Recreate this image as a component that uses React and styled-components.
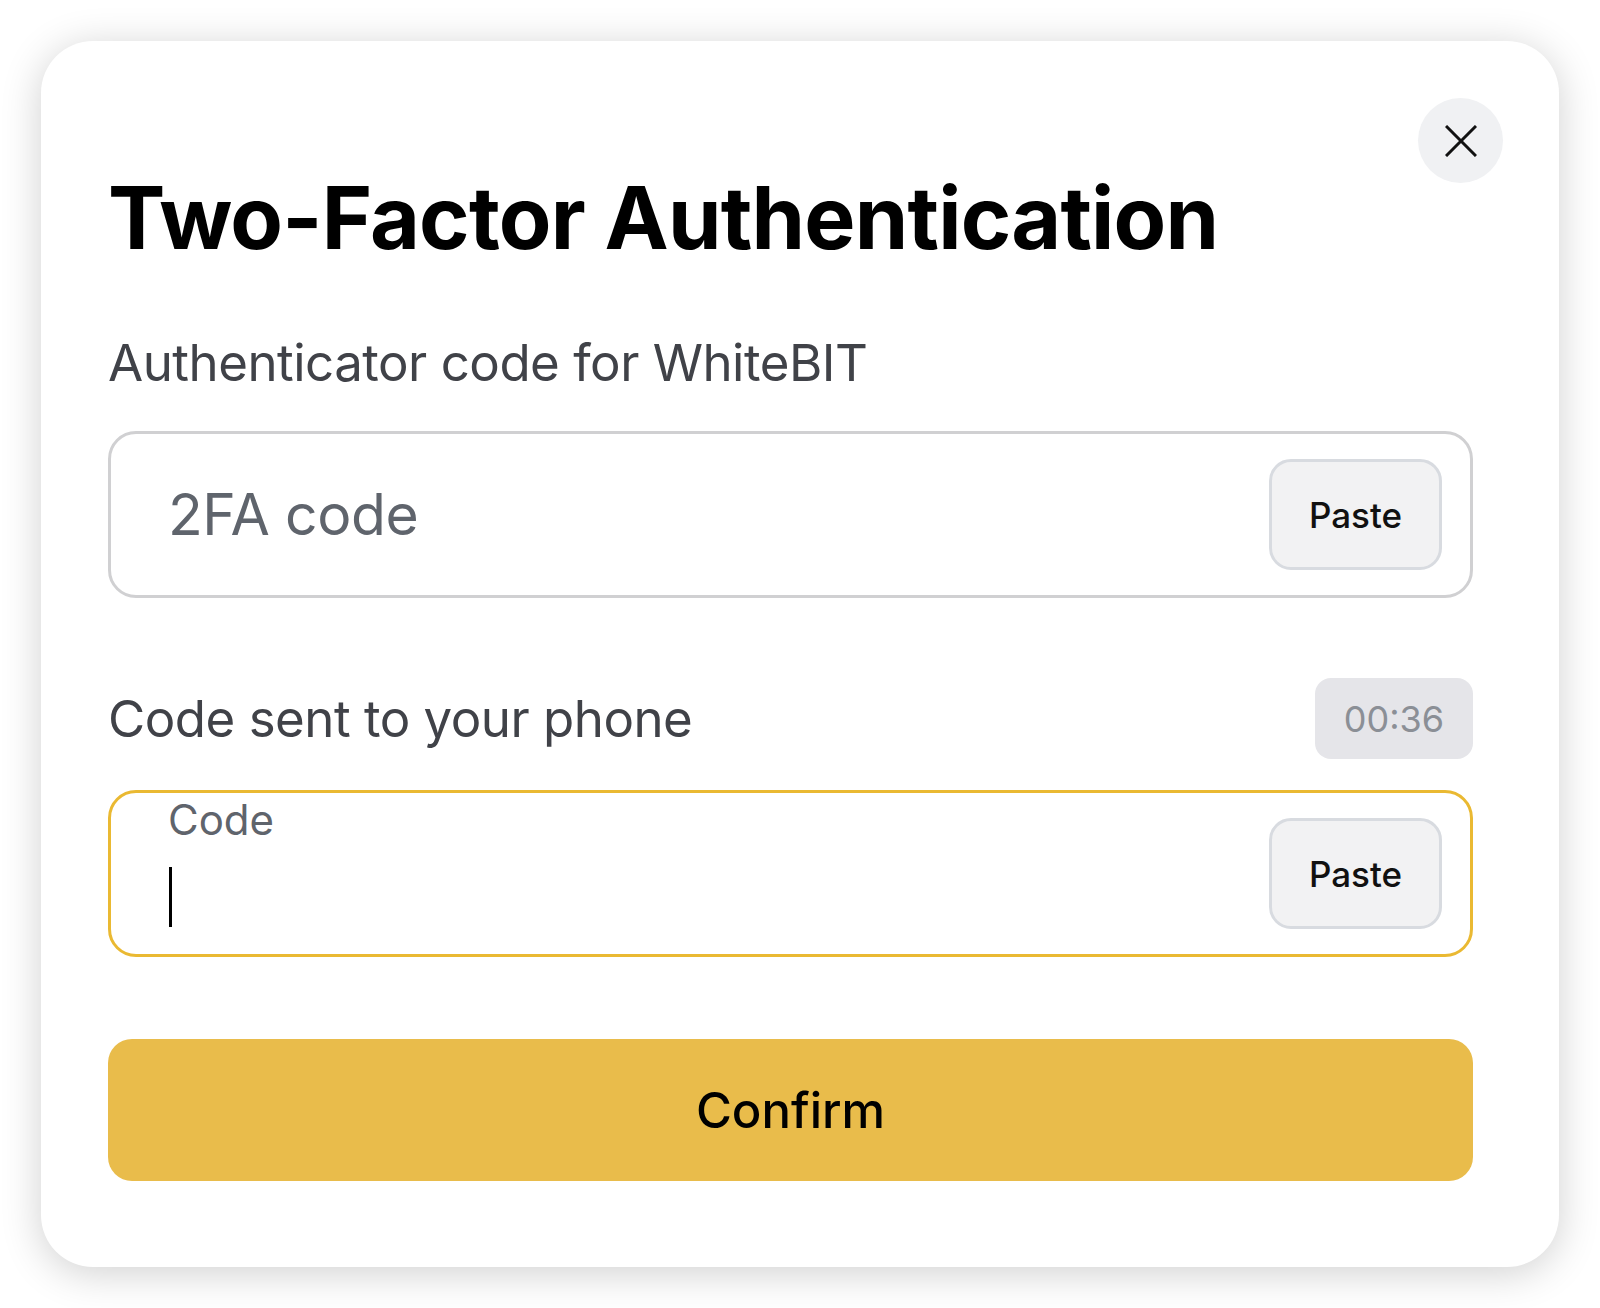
import React from 'react'
import styled, { createGlobalStyle } from 'styled-components'

const GlobalStyle = createGlobalStyle`
    html, body {
        margin: 0;
        padding: 0;
        background: #ffffff;
        font-family: 'Inter', 'Noto Sans', sans-serif;
    }
`

const Page = styled.div`
    width: 1600px;
    height: 1308px;
    box-sizing: border-box;
    padding: 41px;
`

const Card = styled.section`
    position: relative;
    width: 1518px;
    box-sizing: border-box;
    padding: 134px 86px 86px 67px;
    background: #ffffff;
    border-radius: 52px;
    box-shadow: 0 6px 40px rgba(0, 0, 0, 0.19);
    display: flex;
    flex-direction: column;
`

const CloseButton = styled.button`
    position: absolute;
    top: 57px;
    right: 56px;
    width: 85px;
    height: 85px;
    border: none;
    border-radius: 50%;
    background: #f0f1f3;
    display: flex;
    align-items: center;
    justify-content: center;
    padding: 0;
    cursor: pointer;
`

const Title = styled.h1`
    margin: 0 0 76px 0;
    font-size: 86px;
    line-height: 1;
    font-weight: 700;
    letter-spacing: -0.8px;
    color: #000000;
`

const Label = styled.div`
    font-size: 51px;
    line-height: 1;
    font-weight: 400;
    letter-spacing: -0.5px;
    color: #404248;
`

const LabelRow = styled.div`
    display: flex;
    justify-content: space-between;
    align-items: center;
    height: 81px;
    margin-top: 80px;
    margin-bottom: 31px;
`

const Timer = styled.div`
    width: 158px;
    height: 81px;
    border-radius: 16px;
    background: #e5e5e9;
    color: #8b8f96;
    font-size: 36px;
    display: flex;
    align-items: center;
    justify-content: center;
`

const Field = styled.div`
    height: 167px;
    box-sizing: border-box;
    border: 3px solid ${p => (p.$active ? '#eab932' : '#d0d0d2')};
    border-radius: 28px;
    display: flex;
    align-items: center;
    padding: 0 28px 0 57px;
    margin-top: ${p => p.$top || 0}px;
`

const FieldBody = styled.div`
    flex: 1;
    display: flex;
    flex-direction: column;
    justify-content: ${p => (p.$top ? 'flex-start' : 'center')};
    height: 100%;
`

const Placeholder = styled.div`
    font-size: 57px;
    line-height: 1;
    letter-spacing: -0.4px;
    color: #5f646c;
`

const FloatLabel = styled.div`
    font-size: 42px;
    line-height: 1;
    color: #5f646c;
    margin-top: 6px;
`

const Caret = styled.div`
    width: 3px;
    height: 60px;
    background: #000000;
    margin-top: 26px;
    margin-left: 1px;
`

const PasteButton = styled.button`
    width: 173px;
    height: 111px;
    box-sizing: border-box;
    border: 3px solid #d8dbe0;
    border-radius: 22px;
    background: #f2f2f3;
    font-family: 'Inter', 'Noto Sans', sans-serif;
    font-size: 35px;
    font-weight: 500;
    color: #111111;
    cursor: pointer;
`

const ConfirmButton = styled.button`
    margin-top: 82px;
    height: 142px;
    border: none;
    border-radius: 24px;
    background: #e9bc4b;
    font-family: 'Inter', 'Noto Sans', sans-serif;
    font-size: 49px;
    font-weight: 500;
    color: #000000;
    cursor: pointer;
`

const CloseIcon = () => (
    <svg width="32" height="32" viewBox="0 0 32 32" fill="none">
        <path d="M1 1 L31 31 M31 1 L1 31" stroke="#111111" strokeWidth="3" />
    </svg>
)

const App = () => {
    return (
        <Page>
            <GlobalStyle />
            <Card>
                <CloseButton aria-label="Close">
                    <CloseIcon />
                </CloseButton>
                <Title>Two-Factor Authentication</Title>
                <Label>Authenticator code for WhiteBIT</Label>
                <Field $top={43}>
                    <FieldBody>
                        <Placeholder>2FA code</Placeholder>
                    </FieldBody>
                    <PasteButton>Paste</PasteButton>
                </Field>
                <LabelRow>
                    <Label>Code sent to your phone</Label>
                    <Timer>00:36</Timer>
                </LabelRow>
                <Field $active>
                    <FieldBody $top>
                        <FloatLabel>Code</FloatLabel>
                        <Caret />
                    </FieldBody>
                    <PasteButton>Paste</PasteButton>
                </Field>
                <ConfirmButton>Confirm</ConfirmButton>
            </Card>
        </Page>
    )
}

export default App
